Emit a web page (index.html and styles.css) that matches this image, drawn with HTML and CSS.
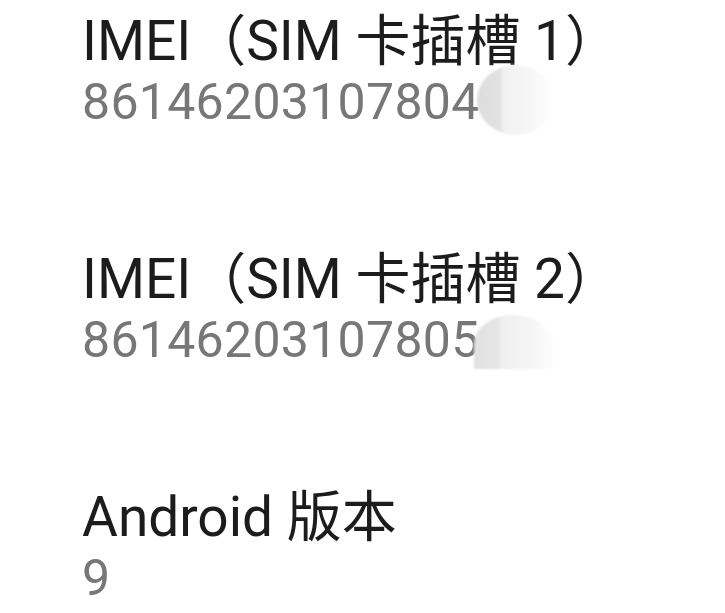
FILE: index.html
```html
<!DOCTYPE html>
<html lang="zh-CN">
<head>
<meta charset="utf-8">
<title>关于手机</title>
<link rel="stylesheet" href="styles.css">
</head>
<body>
<div class="list">
  <div class="item">
    <div class="title">IMEI（SIM 卡插槽 1）</div>
    <div class="value">86146203107804<span class="smudge smudge-1"></span></div>
  </div>
  <div class="item">
    <div class="title">IMEI（SIM 卡插槽 2）</div>
    <div class="value">86146203107805<span class="smudge smudge-2"></span></div>
  </div>
  <div class="item">
    <div class="title">Android 版本</div>
    <div class="value">9</div>
  </div>
</div>
</body>
</html>
```
FILE: styles.css
```css
html, body {
  margin: 0;
  background: #ffffff;
}
body {
  font-family: Roboto, "Noto Sans CJK SC", sans-serif;
  overflow: hidden;
}
.list {
  display: flex;
  flex-direction: column;
  gap: 118px;
  padding: 11px 0 0 82px;
}
.item {
  display: flex;
  flex-direction: column;
}
.title {
  font-size: 55px;
  line-height: 60px;
  color: #1c1c1c;
  white-space: nowrap;
}
.value {
  position: relative;
  margin-top: 2px;
  font-size: 50px;
  line-height: 58px;
  color: #777777;
  letter-spacing: 0.3px;
}
.smudge {
  position: absolute;
  filter: blur(1px);
}
.smudge-1 {
  left: 395px;
  top: -8px;
  width: 78px;
  height: 70px;
  border-radius: 50%;
  background: linear-gradient(to right, #dcdcdc 0%, #e2e2e2 30%, #f1f1f1 33%, #f7f7f7 70%, #ffffff 100%);
}
.smudge-2 {
  left: 392px;
  top: 4px;
  width: 82px;
  height: 54px;
  border-radius: 40px 44px 0 0 / 30px 34px 0 0;
  background: linear-gradient(to right, #e1e1e1 0%, #e5e5e5 30%, #eeeeee 33%, #f5f5f5 70%, #ffffff 100%);
}
```
